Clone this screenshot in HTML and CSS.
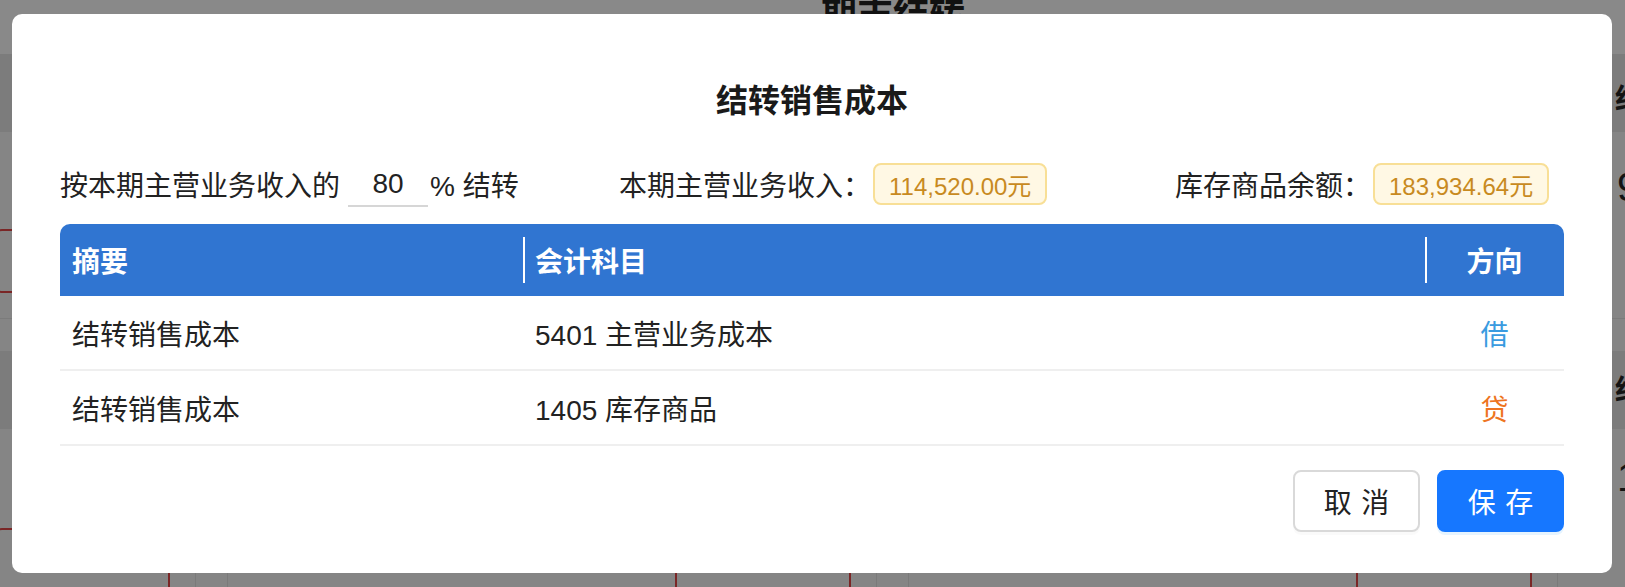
FILE: index.html
```html
<!DOCTYPE html>
<html lang="zh-CN">
<head>
<meta charset="utf-8">
<title>结转销售成本</title>
<link rel="stylesheet" href="styles.css">
</head>
<body>
<div class="bg-page">
  <div class="bg-head"><div class="bg-title">期末结转</div></div>
  <div class="bg-row band h78"><div class="bg-main"></div><div class="bg-edge e-b">结</div></div>
  <div class="bg-row h186"><div class="bg-main"><div class="red-box rb-top"></div></div><div class="bg-edge e-c">9</div></div>
  <div class="bg-row h33 line-top"><div class="bg-main"></div><div class="bg-edge"></div></div>
  <div class="bg-row band h78"><div class="bg-main"></div><div class="bg-edge e-e">结</div></div>
  <div class="bg-row h158">
    <div class="bg-main">
      <div class="bottom-boxes">
        <div class="grp"><div class="red-box rb-low"></div><div class="gline g1"></div><div class="gline g2"></div></div>
        <div class="grp"><div class="red-box rb-low"></div><div class="gline g1"></div><div class="gline g2"></div></div>
        <div class="grp"><div class="red-box rb-low"></div><div class="gline g1"></div></div>
      </div>
    </div>
    <div class="bg-edge e-f">1</div>
  </div>
</div>

<div class="mask">
  <div class="modal">
    <h2 class="modal-title">结转销售成本</h2>
    <div class="controls">
      <div class="ctl">按本期主营业务收入的<input class="pct" value="80"><span class="pct-unit">% 结转</span></div>
      <div class="ctl">本期主营业务收入：<span class="badge">114,520.00元</span></div>
      <div class="ctl">库存商品余额：<span class="badge">183,934.64元</span></div>
    </div>
    <table class="entries">
      <colgroup><col class="c1"><col class="c2"><col class="c3"></colgroup>
      <thead>
        <tr><th class="first">摘要</th><th class="sep">会计科目</th><th class="sep last center">方向</th></tr>
      </thead>
      <tbody>
        <tr><td>结转销售成本</td><td>5401 主营业务成本</td><td class="center debit">借</td></tr>
        <tr><td>结转销售成本</td><td>1405 库存商品</td><td class="center credit">贷</td></tr>
      </tbody>
    </table>
    <div class="footer">
      <button class="btn">取消</button>
      <button class="btn primary">保存</button>
    </div>
  </div>
</div>
</body>
</html>
```

FILE: styles.css
```css
html, body {
  margin: 0;
  padding: 0;
}
body {
  width: 1625px;
  height: 587px;
  overflow: hidden;
  background: #858585;
  font-family: "Liberation Sans", "Noto Sans CJK SC", sans-serif;
  color: #222;
}

/* dimmed page behind the dialog */
.bg-page {
  display: flex;
  flex-direction: column;
  height: 587px;
  overflow: hidden;
}
.bg-head {
  height: 54px;
  flex: none;
  background: #898989;
  overflow: hidden;
}
.bg-title {
  margin-top: -7px;
  padding-left: 161px;
  text-align: center;
  font-size: 36px;
  line-height: 36px;
  font-weight: 700;
  color: #111;
  font-family: "Noto Sans CJK SC", sans-serif;
}
.bg-row {
  flex: none;
  display: grid;
  grid-template-columns: 1615px 1fr;
  overflow: hidden;
  background: #858585;
}
.bg-row.band { background: #7c7c7c; }
.h78 { height: 78px; }
.h186 { height: 186px; }
.h33 { height: 33px; }
.h158 { height: 158px; }
.line-top { border-top: 1px solid #7b7b7b; height: 32px; }
.bg-main { min-width: 0; overflow: hidden; }
.bg-edge {
  white-space: nowrap;
  color: #141414;
  font-family: "Noto Sans CJK SC", sans-serif;
}
.e-b, .e-e {
  font-size: 28px;
  line-height: 28px;
  font-weight: 700;
}
.e-b { margin-top: 29px; }
.e-e { margin-top: 23px; }
.e-c, .e-f {
  font-size: 40px;
  line-height: 40px;
  font-family: "Liberation Sans", sans-serif;
  margin-left: 2px;
}
.e-c { margin-top: 35px; }
.e-f { margin-top: 28px; }

.red-box {
  border: 2px solid #7a2626;
  border-radius: 8px;
  box-sizing: border-box;
}
.rb-top {
  width: 175px;
  height: 64px;
  margin: 97px 0 0 -6px;
}
.bottom-boxes {
  display: flex;
  margin: 99px 0 0 -6px;
  gap: 0;
}
.grp {
  display: flex;
  width: 681px;
  flex: none;
}
.rb-low {
  width: 176px;
  height: 120px;
  flex: none;
}
.gline {
  width: 1px;
  height: 120px;
  background: #7a7a7a;
  flex: none;
}
.g1 { margin-left: 25px; }
.g2 { margin-left: 31px; }

/* dialog */
.mask {
  position: fixed;
  inset: 0;
}
.modal {
  margin: 14px 0 0 12px;
  width: 1600px;
  height: 559px;
  box-sizing: border-box;
  padding: 0 48px;
  background: #fff;
  border-radius: 10px;
}
.modal-title {
  margin: 0;
  padding-top: 64px;
  font-size: 32px;
  line-height: 41px;
  font-weight: 700;
  text-align: center;
  color: #1a1a1a;
  font-family: "Noto Sans CJK SC", sans-serif;
}
.controls {
  margin-top: 44px;
  height: 42px;
  display: grid;
  grid-template-columns: 559px 556px auto;
  align-items: center;
  font-size: 28px;
  color: #222;
}
.ctl {
  display: flex;
  align-items: center;
  white-space: nowrap;
  height: 42px;
}
.pct {
  width: 80px;
  height: 44px;
  box-sizing: border-box;
  margin: 0 2px 0 8px;
  padding: 0;
  border: none;
  border-bottom: 2px solid #d6d6d6;
  outline: none;
  background: transparent;
  text-align: center;
  font: inherit;
  font-size: 28px;
  color: #222;
  align-self: flex-start;
}
.badge {
  display: inline-flex;
  align-items: center;
  height: 42px;
  box-sizing: border-box;
  margin-left: 2px;
  padding: 0 14px 0 14px;
  border: 2px solid #f8df96;
  border-radius: 8px;
  background: #fff8e4;
  color: #c88a1f;
  font-size: 24px;
}

.entries {
  margin-top: 19px;
  width: 100%;
  table-layout: fixed;
  border-collapse: separate;
  border-spacing: 0;
  font-size: 28px;
}
.c1 { width: 463px; }
.c3 { width: 139px; }
.entries th {
  height: 72px;
  padding: 0 12px;
  background: #3075d1;
  color: #fff;
  font-weight: 700;
  text-align: left;
  font-family: "Noto Sans CJK SC", sans-serif;
}
.entries th.first { border-top-left-radius: 10px; }
.entries th.last { border-top-right-radius: 10px; }
.entries th.sep { position: relative; }
.entries th.sep::before {
  content: "";
  position: absolute;
  left: 0;
  top: 13px;
  bottom: 13px;
  width: 2px;
  background: #fff;
}
.entries td {
  height: 75px;
  box-sizing: border-box;
  padding: 0 12px;
  border-bottom: 2px solid #efefef;
  color: #222;
}
.entries .center { text-align: center; }
.debit { color: #3a9be0 !important; }
.credit { color: #ee7421 !important; }

.footer {
  margin-top: 24px;
  display: flex;
  justify-content: flex-end;
  gap: 17px;
}
.btn {
  width: 127px;
  height: 62px;
  box-sizing: border-box;
  padding: 0 0 0 0.34em;
  border: 2px solid #d9d9d9;
  border-radius: 8px;
  background: #fff;
  color: #222;
  font-family: "Noto Sans CJK SC", sans-serif;
  font-size: 28px;
  letter-spacing: 0.34em;
  box-shadow: 0 3px 0 rgba(0, 0, 0, 0.02);
}
.btn.primary {
  border-color: #1677ff;
  background: #1677ff;
  color: #fff;
  box-shadow: 0 3px 0 rgba(5, 145, 255, 0.1);
}
```
